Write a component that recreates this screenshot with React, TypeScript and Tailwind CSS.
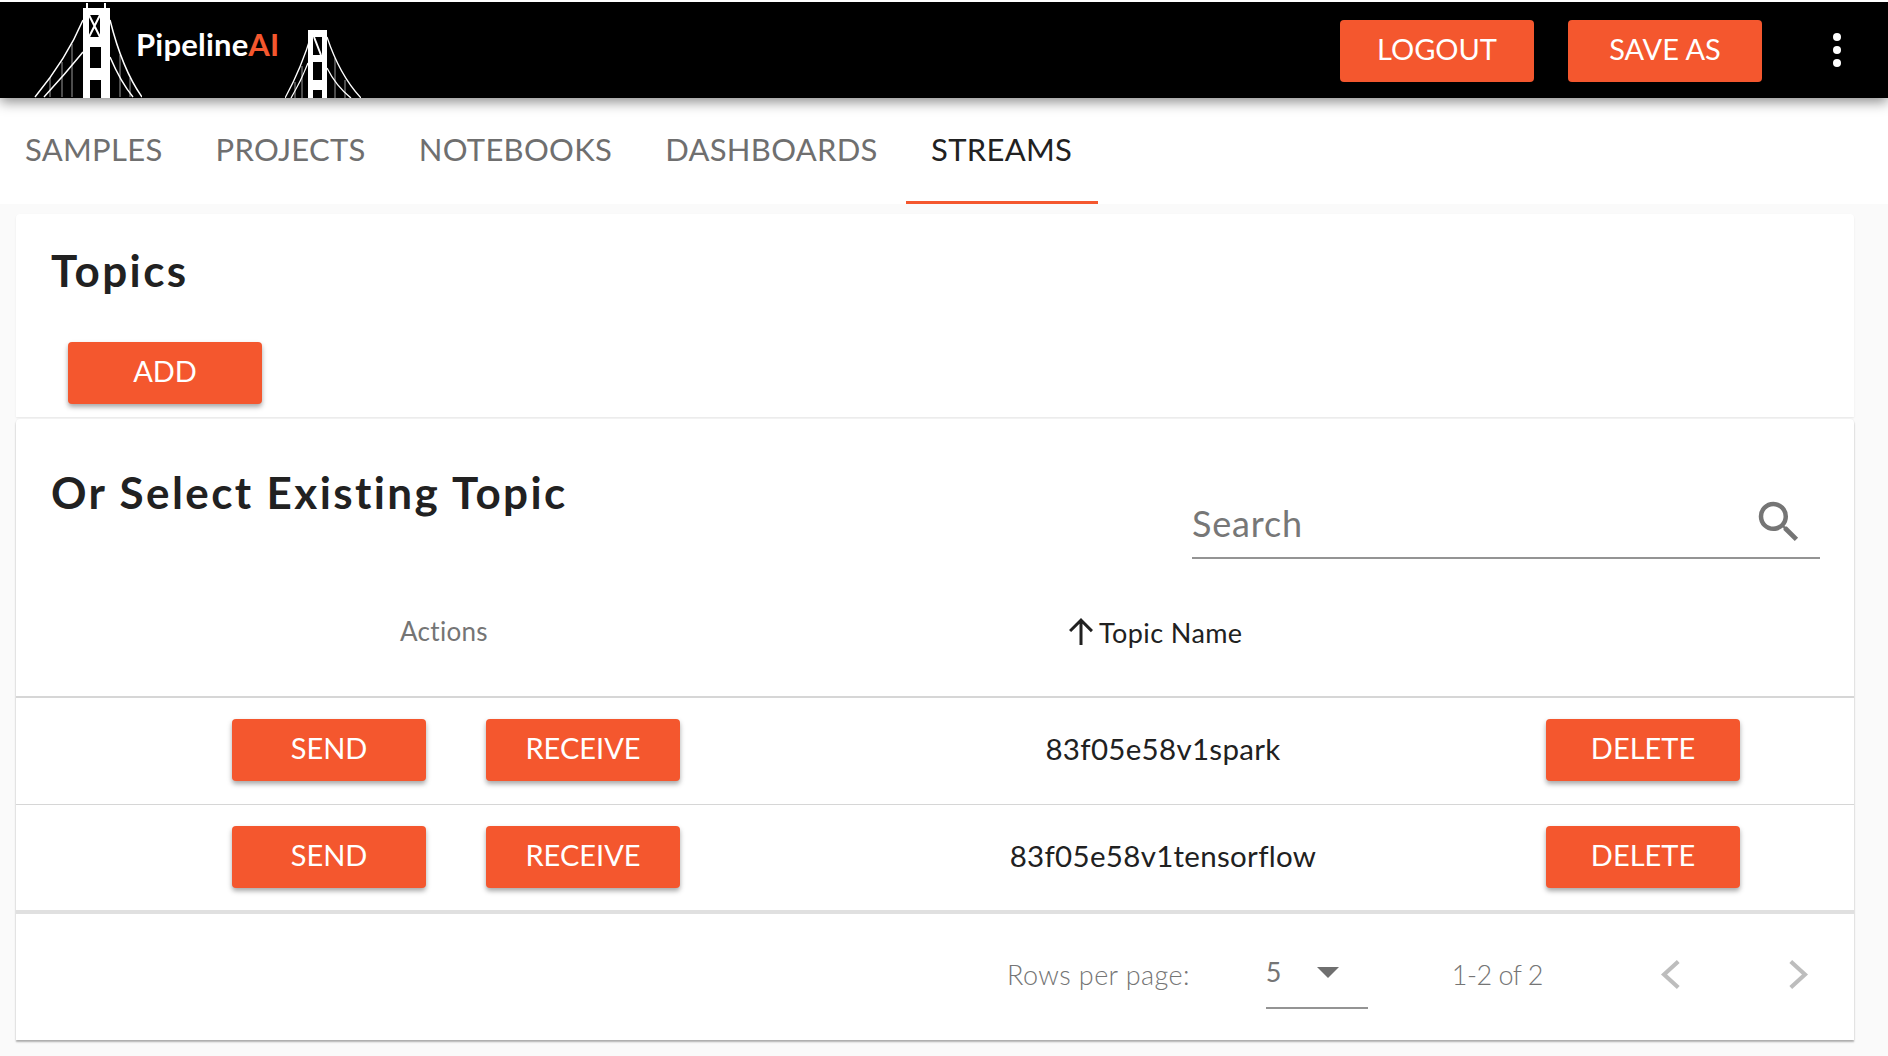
const orange = "bg-[#f4572e]"

const BigBridge = () => (
  <svg viewBox="0 2 108 96" className="w-[108px] h-[96px] shrink-0" fill="none">
    <path d="M49 98V8h3V3h2v5h16V3h2v5h4v90H67V80H56v18zM55 15v22h11V15zM56 47v21h11V47z" fill="#fff" fillRule="evenodd" />
    <path d="M55 15l11 22M66 15L55 37" stroke="#fff" strokeWidth="2" />
    <path d="M49 20C38 46 20 74 1 97M49 52C36 68 22 84 10 97M76 20c7 28 17 56 32 77M76 57c6 14 13 28 23 40" stroke="#fff" strokeWidth="1.5" />
    <path d="M16 78v19M28 62v35M38 44v53M86 55v42M96 78v19" stroke="#fff" strokeWidth="1" opacity="0.6" />
  </svg>
)

const SmallBridge = () => (
  <svg viewBox="0 0 76 70" className="w-[76px] h-[70px] shrink-0" fill="none">
    <path d="M23 70V2h19v68H37v-8h-9v8zM28 9v18h9V9zM28 34v18h9V34z" fill="#fff" fillRule="evenodd" />
    <path d="M29 9l7 18" stroke="#fff" strokeWidth="2" />
    <path d="M27 5C20 28 10 52 0 70M23 35C18 48 12 60 6 70M42 9c8 24 20 46 34 61M42 40c6 12 14 22 24 30" stroke="#fff" strokeWidth="1.3" />
    <path d="M10 54v16M17 38v32M50 30v40M60 52v18" stroke="#fff" strokeWidth="1" opacity="0.6" />
  </svg>
)

const Btn = ({ label, raised = true, className = "" }: { label: string; raised?: boolean; className?: string }) => (
  <button
    className={`${orange} w-[194px] h-[62px] rounded-[4px] text-white text-[29px] leading-none font-normal flex items-center justify-center pb-[5px] ${
      raised ? "shadow-[0_3px_5px_rgba(0,0,0,0.35)]" : ""
    } ${className}`}
  >
    {label}
  </button>
)

const tabs = ["SAMPLES", "PROJECTS", "NOTEBOOKS", "DASHBOARDS", "STREAMS"]

const rows = [
  { name: "83f05e58v1spark", h: "h-[108px]" },
  { name: "83f05e58v1tensorflow", h: "h-[106px]" },
]

export default function App() {
  return (
    <div className="w-[1888px] h-[1056px] overflow-hidden bg-[#fafafa] font-['Lato',sans-serif] text-[#212121]">
      {/* Header */}
      <header className="relative z-10 h-[98px] bg-black flex items-center shadow-[0_4px_12px_rgba(0,0,0,0.45)] border-t-2 border-white">
        <div className="flex items-end h-full pl-[34px]">
          <BigBridge />
          <span className="ml-[-6px] mb-[38px] w-[149px] text-[31px] leading-none font-bold text-white tracking-[0.2px]">
            Pipeline<span className="text-[#f4572e]">AI</span>
          </span>
          <SmallBridge />
        </div>
        <div className="ml-auto flex items-center">
          <Btn label="LOGOUT" raised={false} className="mt-[2px]" />
          <Btn label="SAVE AS" raised={false} className="ml-[34px] mt-[2px]" />
          <div className="ml-[71px] mr-[47px] flex flex-col gap-[5px]">
            <span className="w-[8px] h-[8px] rounded-full bg-white" />
            <span className="w-[8px] h-[8px] rounded-full bg-white" />
            <span className="w-[8px] h-[8px] rounded-full bg-white" />
          </div>
        </div>
      </header>

      {/* Tabs */}
      <nav className="h-[106px] bg-white flex">
        {tabs.map((t) => (
          <div
            key={t}
            className={`h-full flex items-center text-[31px] leading-none tracking-[0.3px] ${
              t === "STREAMS"
                ? "w-[192px] justify-center pt-[3px] pb-[4px] text-[#212121] border-b-[3px] border-[#f4572e]"
                : "px-[25px] mr-[3px] pb-[4px] text-[#6f6f6f]"
            }`}
          >
            {t}
          </div>
        ))}
      </nav>

      <main className="pt-[10px] pl-[16px] w-[1854px]">
        {/* Topics card */}
        <section className="h-[203px] bg-white rounded-t-[4px] shadow-[0_1px_2px_rgba(0,0,0,0.08)] pt-[31px]">
          <h2 className="pl-[35px] text-[44px] leading-[50px] font-bold tracking-[2.4px]">Topics</h2>
          <div className="pl-[52px] mt-[47px]">
            <Btn label="ADD" />
          </div>
        </section>

        {/* Existing topics card */}
        <section className="mt-[2px] h-[621px] bg-white rounded-t-[4px] shadow-[0_2px_2px_rgba(0,0,0,0.3),0_0_2px_rgba(0,0,0,0.06)] flex flex-col">
          <div className="h-[277px] relative">
            <div className="flex justify-between items-start">
              <h2 className="pl-[35px] pt-[46px] text-[44px] leading-[54px] font-bold tracking-[2.4px]">
                Or Select Existing Topic
              </h2>
              <div className="mt-[62px] mr-[34px] w-[628px] h-[78px] border-b-2 border-[#949494] flex items-center justify-between pr-[14px] pt-[8px]">
                <span className="text-[36px] leading-none text-[#777] tracking-[0.8px]">Search</span>
                <svg viewBox="0 0 24 24" className="w-[54px] h-[54px] fill-[#757575] mt-[-3px]">
                  <path d="M15.5 14h-.79l-.28-.27A6.47 6.47 0 0 0 16 9.5 6.5 6.5 0 1 0 9.5 16c1.61 0 3.09-.59 4.23-1.57l.27.28v.79l5 4.99L20.49 19l-4.99-5zm-6 0C7.01 14 5 11.99 5 9.5S7.01 5 9.5 5 14 7.01 14 9.5 11.99 14 9.5 14z" />
                </svg>
              </div>
            </div>
            {/* Table header */}
            <div className="absolute left-0 right-0 top-[188px] h-[48px] flex items-center">
              <span className="ml-[384px] w-[663px] text-[26px] text-[#757575] leading-none tracking-[0.3px]">Actions</span>
              <span className="flex items-center text-[27px] leading-none text-[#212121] mt-[3px] tracking-[0.4px]">
                <svg viewBox="0 0 24 24" className="w-[36px] h-[36px] fill-[#212121] mt-[-6px]">
                  <path d="M4 12l1.41 1.41L11 7.83V22h2V7.83l5.58 5.59L20 12l-8-8-8 8z" />
                </svg>
                Topic Name
              </span>
            </div>
          </div>

          {/* Rows */}
          {rows.map((r, i) => (
            <div
              key={r.name}
              className={`${r.h} flex items-center border-[#d6d6d6] pb-[2px] ${i === 0 ? "border-t-2" : "border-t"}`}
            >
              <Btn label="SEND" className="ml-[216px]" />
              <Btn label="RECEIVE" className="ml-[60px]" />
              <div className="w-[866px] pl-[100px] mb-[2px] text-center text-[29.5px] leading-none tracking-[0.3px]">{r.name}</div>
              <Btn label="DELETE" />
            </div>
          ))}

          {/* Footer */}
          <div className="flex-1 border-t-[4px] border-[#e0e0e0] flex items-center text-[#757575] text-[27px] leading-none pb-[6px]">
            <span className="ml-[991px] font-light tracking-[0.4px]">Rows per page:</span>
            <div className="ml-[76px] w-[102px] h-[70px] border-b-2 border-[#949494] flex items-center justify-between pr-[29px] pt-[4px]">
              <span className="mb-[7px]">5</span>
              <span className="mb-[6px] w-0 h-0 border-x-[11px] border-x-transparent border-t-[11px] border-t-[#6f6f6f]" />
            </div>
            <span className="ml-[84px] font-light tracking-[-0.5px]">1-2 of 2</span>
            <svg viewBox="0 0 24 24" className="ml-[112px] w-[31px] h-[31px]" fill="none" stroke="#bdbdbd" strokeWidth="3.2">
              <path d="M18 2L7 12l11 10" />
            </svg>
            <svg viewBox="0 0 24 24" className="ml-[97px] w-[31px] h-[31px]" fill="none" stroke="#bdbdbd" strokeWidth="3.2">
              <path d="M6 2l11 10L6 22" />
            </svg>
          </div>
        </section>
      </main>
    </div>
  )
}
